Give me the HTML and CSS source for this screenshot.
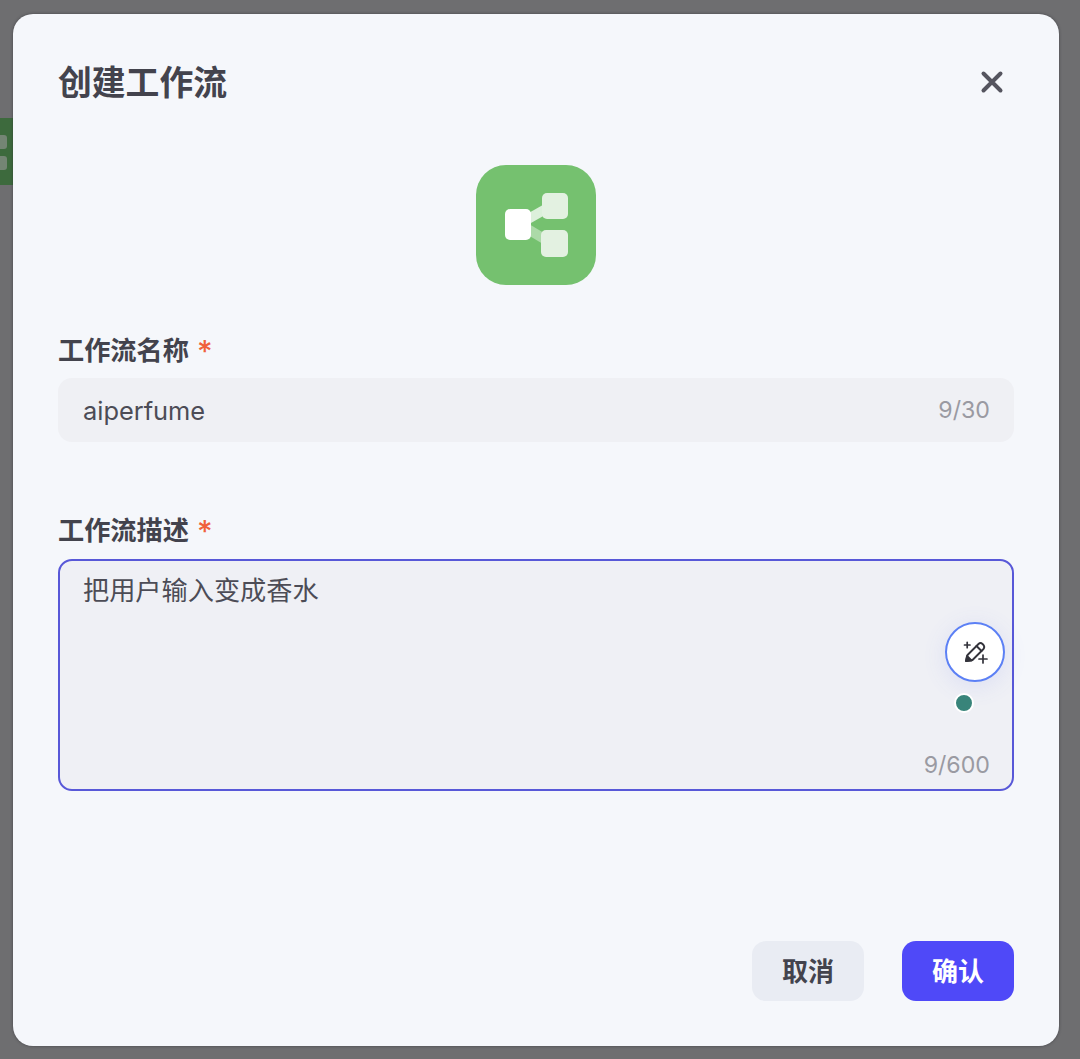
FILE: index.html
```html
<!DOCTYPE html>
<html lang="zh">
<head>
<meta charset="utf-8">
<title>创建工作流</title>
<link rel="stylesheet" href="styles.css">
</head>
<body>
<div class="behind"><span class="behind-dot"></span><span class="behind-dot"></span></div>
<main class="modal">
  <header class="modal-head">
    <h1 class="modal-title">创建工作流</h1>
    <svg class="close" width="24" height="24" viewBox="0 0 24 24"><path d="M3.500 3.500 20.500 20.500M20.500 3.500 3.500 20.500" fill="none" stroke="#55555f" stroke-width="4" stroke-linecap="round"/></svg>
  </header>
  <div class="logo-row">
    <svg class="logo" width="120" height="120" viewBox="0 0 120 120">
      <rect width="120" height="120" rx="30" fill="#75c16f"/>
      <path d="M45 58 75 41" stroke="#fff" stroke-width="10" opacity=".75" fill="none"/>
      <path d="M45 60 75 78" stroke="#fff" stroke-width="10" opacity=".4" fill="none"/>
      <rect x="66" y="28" width="26" height="26" rx="5" fill="#e3f1e1"/>
      <rect x="65" y="65" width="27" height="27" rx="5" fill="#e3f1e1"/>
      <rect x="29" y="44" width="26" height="31" rx="5" fill="#fff"/>
    </svg>
  </div>
  <section class="field field-name">
    <label class="label">工作流名称<span class="req">*</span></label>
    <div class="input">
      <span class="value value-latin">aiperfume</span>
      <span class="count">9/30</span>
    </div>
  </section>
  <section class="field field-desc">
    <label class="label">工作流描述<span class="req">*</span></label>
    <div class="textarea">
      <span class="value">把用户输入变成香水</span>
      <span class="count count-area">9/600</span>
      <div class="magic">
        <svg width="26" height="26" viewBox="0 0 26 26" fill="none" stroke="#33333b" stroke-width="1.900" stroke-linejoin="round" stroke-linecap="round">
          <path d="M4 22 5.500 16 16.500 5Q18.500 3.200 20.500 5L21.500 6Q23 8 21.500 10L10.500 21Z"/>
          <path d="M14.500 7 19.500 12"/>
          <path d="M4 22 5 17 9.500 21.500Z" fill="#33333b"/>
          <path d="M2.500 6H8M5.200 3.300V8.700M17 20H25M21 16V24" stroke-width="1.700"/>
        </svg>
      </div>
      <span class="status-dot"></span>
    </div>
  </section>
  <footer class="actions">
    <button class="btn btn-cancel">取消</button>
    <button class="btn btn-ok">确认</button>
  </footer>
</main>
</body>
</html>
```
FILE: styles.css
```css
* { box-sizing: border-box; }
html, body { margin: 0; height: 100%; }
body {
  width: 1080px;
  height: 1059px;
  overflow: hidden;
  background: #6e6e70;
  padding: 14px 21px 13px 13px;
  font-family: Inter, "Noto Sans CJK SC", "Noto Sans", sans-serif;
  color: #43434d;
  position: relative;
}
.behind {
  position: absolute;
  left: 0;
  top: 118px;
  width: 13px;
  height: 67px;
  background: #3d6a3d;
  display: flex;
  flex-direction: column;
  gap: 7px;
  padding-top: 17px;
}
.behind-dot { width: 7px; height: 14px; background: #748574; border-radius: 0 3px 3px 0; }
.modal {
  width: 1046px;
  height: 1032px;
  background: #f5f7fb;
  border-radius: 20px;
  box-shadow: 0 0 3px rgba(40, 40, 45, .6);
  padding: 0 45px;
  display: flex;
  flex-direction: column;
  position: relative;
}
.modal-head {
  display: flex;
  justify-content: space-between;
  align-items: center;
  height: 136px;
  padding: 0 10px 0 1px;
}
.modal-title { margin: 2px 0 0 -1px; font-size: 33.800px; font-weight: 600; line-height: 1; color: #43434d; }
.logo-row { display: flex; justify-content: center; margin-top: 15px; height: 120px; }
.logo { display: block; }
.field { display: flex; flex-direction: column; }
.field-name { margin-top: 47px; }
.field-desc { margin-top: 70px; }
.label {
  font-size: 26.200px;
  font-weight: 600;
  line-height: 38px;
  height: 38px;
  color: #43434d;
}
.req {
  color: #f0603c;
  margin-left: 8px;
  font-family: Inter, sans-serif;
  font-weight: 500;
  font-size: 30px;
  line-height: 0;
  vertical-align: -2px;
}
.input {
  margin-top: 8px;
  height: 64px;
  background: #eff0f4;
  border-radius: 14px;
  display: flex;
  align-items: center;
  justify-content: space-between;
  padding: 0 24px 0 25px;
}
.value { font-size: 26.200px; color: #4c4c56; font-weight: 400; }
.value-latin { font-size: 25.400px; }
.count { font-size: 23.200px; color: #9a9aa2; }
.textarea {
  margin-top: 9px;
  height: 232px;
  background: #eff0f5;
  border: 2px solid #5858d8;
  border-radius: 14px;
  padding: 9px 23px;
  position: relative;
}
.count-area { position: absolute; right: 22px; bottom: 10px; }
.magic {
  position: absolute;
  right: 7px;
  top: 61px;
  width: 60px;
  height: 60px;
  border-radius: 50%;
  background: #fff;
  border: 2px solid #5c80f5;
  box-shadow: 0 4px 24px rgba(90, 110, 240, .12);
  display: flex;
  align-items: center;
  justify-content: center;
}
.status-dot {
  position: absolute;
  right: 38px;
  top: 132px;
  width: 20px;
  height: 20px;
  border-radius: 50%;
  background: #38847a;
  border: 2px solid #fff;
}
.actions {
  margin-top: auto;
  margin-bottom: 45px;
  display: flex;
  justify-content: flex-end;
  gap: 38px;
}
.btn {
  width: 112px;
  height: 60px;
  border: 0;
  border-radius: 14px;
  font: 600 26px Inter, "Noto Sans CJK SC", sans-serif;
  padding: 0 0 3px;
}
.btn-cancel { background: #e9ecf3; color: #43434d; }
.btn-ok { background: #4f49f8; color: #fff; }
```
